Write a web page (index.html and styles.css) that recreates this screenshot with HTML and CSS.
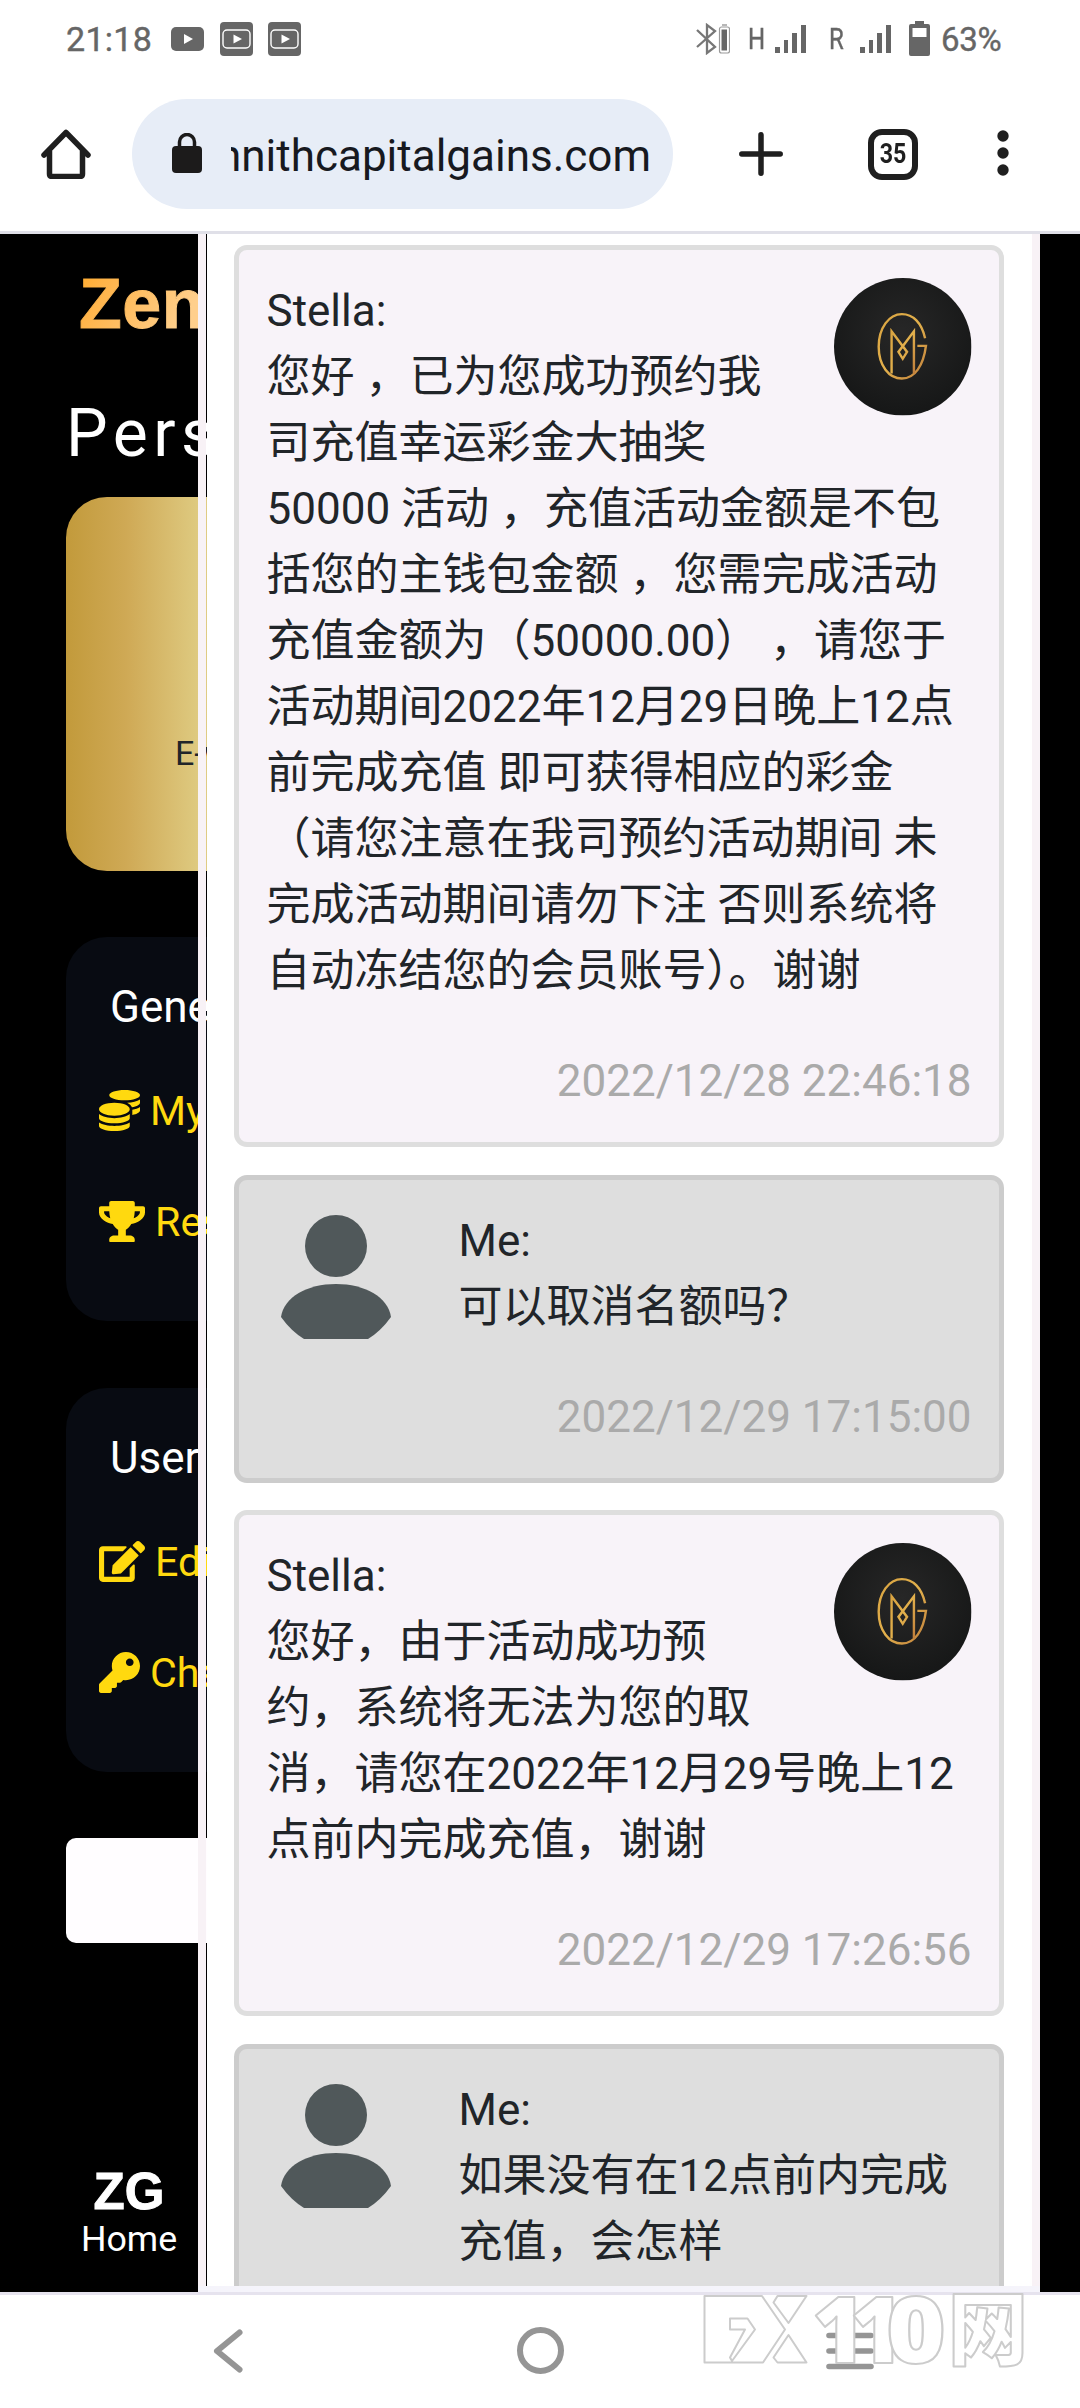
FILE: index.html
```html
<!DOCTYPE html>
<html lang="zh-CN">
<head>
<meta charset="utf-8">
<title>Messages</title>
<link rel="stylesheet" href="styles.css">
</head>
<body>
<svg class="defs" width="0" height="0">
  <defs>
    <radialGradient id="disc" cx=".5" cy=".4" r=".6"><stop offset="0" stop-color="#272727"/><stop offset="1" stop-color="#161717"/></radialGradient>
    <linearGradient id="foil" x1="0" y1="0" x2="1" y2="1"><stop offset="0" stop-color="#d9a441"/><stop offset=".5" stop-color="#e2b04c"/><stop offset="1" stop-color="#c07f3c"/></linearGradient>
    <symbol id="support" viewBox="0 0 160 160">
      <circle cx="80" cy="80" r="80" fill="url(#disc)"/>
      <g fill="none" stroke="url(#foil)" stroke-width="2.8">
        <path d="M106 70C102 52 92 42 79 42C64 42 52 58 52 80C52 102 64 117 79 117C94 117 104 102 107 79H97"/>
        <path d="M67 111V62L85 86L80 94L75 86L93 62V111"/>
      </g>
    </symbol>
    <symbol id="person" viewBox="0 0 110 124">
      <circle cx="55" cy="31" r="31"/>
      <path d="M0 102C3 82 26 69 55 69S107 82 110 102Q100 116 87 124H23Q10 116 0 102Z"/>
    </symbol>
    <symbol id="clip" viewBox="0 0 33 34">
      <rect width="33" height="34" rx="4" fill="#666"/>
      <rect x="3" y="8" width="27" height="18" rx="4" fill="none" stroke="#fff" stroke-width="1.4"/>
      <path d="M13.5 12.5L22 17L13.5 21.5Z" fill="#fff"/>
    </symbol>
    <symbol id="signal" viewBox="0 0 31 28">
      <path d="M0 22h5v6H0zM9 15h4v13H9zM17 8h5v20h-5zM26 0h5v28h-5z" fill="#666"/>
    </symbol>
  </defs>
</svg>
<div class="screen">
  <header class="status">
    <div class="status-left">
      <span class="clock">21:18</span>
      <svg class="yt" viewBox="0 0 33 24"><rect width="33" height="24" rx="5" fill="#666"/><path d="M13 7l9 5-9 5z" fill="#fff"/></svg>
      <svg class="clip"><use href="#clip"/></svg>
      <svg class="clip"><use href="#clip"/></svg>
    </div>
    <div class="status-right">
      <svg class="bt" viewBox="0 0 34 32" fill="none" stroke="#777">
        <path d="M1 7l18 17-8 6V2l8 6L1 24" stroke-width="2.3"/>
        <rect x="23.5" y="4" width="10" height="26" rx="2" stroke="#999" stroke-width="1.2"/>
        <path d="M25.5 6.5h5.500v21h-5.500z" fill="#666" stroke="none"/>
        <path d="M26 2h5" stroke="#999" stroke-width="1.4"/>
      </svg>
      <span class="net net-h">H</span>
      <svg class="signal"><use href="#signal"/></svg>
      <span class="net net-r">R</span>
      <svg class="signal"><use href="#signal"/></svg>
      <svg class="battery" viewBox="0 0 21 35"><path fill="#666" fill-rule="evenodd" d="M6 0h9v3h4q2 0 2 2v28q0 2-2 2H2q-2 0-2-2V5q0-2 2-2h4zM3.500 7v9h14V7z"/></svg>
      <span class="percent">63%</span>
    </div>
  </header>

  <nav class="toolbar">
    <svg class="home" viewBox="0 0 50 50" fill="none" stroke="#1f1f1f" stroke-width="5.500" stroke-linecap="round" stroke-linejoin="round"><path d="M3 26L25 3.500L47 26M8.500 22V45q0 2.500 2.500 2.500h28q2.500 0 2.500-2.500V22"/></svg>
    <div class="address">
      <svg class="lock" viewBox="0 0 30 40"><rect y="13" width="30" height="27" rx="4" fill="#1c1b1b"/><path d="M7.500 15V9a7.500 7.500 0 0 1 15 0v6" fill="none" stroke="#1c1b1b" stroke-width="3.500"/></svg>
      <span class="url"><span>zennithcapitalgains.com</span></span>
    </div>
    <svg class="plus" viewBox="0 0 44 44"><path d="M22 2.800V41.200M2.800 22H41.200" stroke="#1f1f1f" stroke-width="5.500" stroke-linecap="round"/></svg>
    <span class="tabs"><span>35</span></span>
    <svg class="more" viewBox="0 0 12 46" fill="#1f1f1f"><circle cx="6" cy="6" r="5.700"/><circle cx="6" cy="23" r="5.700"/><circle cx="6" cy="40" r="5.700"/></svg>
  </nav>

  <main class="page">
    <div class="account">
      <div class="brand">Zennith</div>
      <h1 class="title">Personal</h1>
      <section class="wallet"><span>E-wallet</span></section>
      <section class="menu">
        <h2>General</h2>
        <a class="item"><svg class="ico" viewBox="0 0 512 512"><path d="M0 405.300V448c0 35.300 86 64 192 64s192-28.700 192-64v-42.700C342.700 434.400 267.200 448 192 448S41.300 434.400 0 405.300zM320 128c106 0 192-28.700 192-64S426 0 320 0 128 28.700 128 64s86 64 192 64zM0 300.400V352c0 35.300 86 64 192 64s192-28.700 192-64v-51.600c-41.300 34-116.900 51.600-192 51.600S41.300 334.400 0 300.400zm416 11c57.300-11.100 96-31.700 96-55.400v-42.700c-23.200 16.400-57.300 27.600-96 34.500v63.600zM192 160C86 160 0 195.800 0 240s86 80 192 80 192-35.800 192-80-86-80-192-80zm219.300 56.300c60-10.800 100.700-32 100.700-56.300v-42.700c-35.500 25.100-96.500 38.600-160.700 41.800 29.500 14.300 51.200 33.500 60 57.200z"/></svg>My Wallet</a>
        <a class="item"><svg class="ico wide" viewBox="0 0 576 512"><path d="M552 64H448V24c0-13.300-10.700-24-24-24H152c-13.300 0-24 10.700-24 24v40H24C10.700 64 0 74.700 0 88v56c0 35.700 22.500 72.400 61.900 100.700 31.500 22.700 69.800 37.100 110 41.700C203.300 338.500 240 360 240 360v72h-48c-35.300 0-64 20.700-64 56v12c0 6.600 5.400 12 12 12h296c6.600 0 12-5.400 12-12v-12c0-35.300-28.700-56-64-56h-48v-72s36.700-21.500 68.100-73.600c40.300-4.600 78.600-19 110-41.700 39.300-28.300 61.900-65 61.900-100.700V88c0-13.300-10.700-24-24-24zM99.300 192.800C74.900 175.200 64 155.600 64 144v-16h64.200c1 32.600 5.800 61.200 12.800 86.200-15.100-5.200-29.200-12.400-41.700-21.400zM512 144c0 16.100-17.700 36.100-35.300 48.800-12.500 9-26.700 16.200-41.800 21.400 7-25 11.800-53.600 12.800-86.200H512v16z"/></svg>Results</a>
      </section>
      <section class="menu">
        <h2>User</h2>
        <a class="item"><svg class="ico wide" viewBox="0 0 576 512"><path d="M402.600 83.200l90.200 90.200c3.800 3.800 3.800 10 0 13.800L274.400 405.600l-92.800 10.300c-12.400 1.400-22.900-9.100-21.500-21.500l10.300-92.800L388.800 83.200c3.800-3.800 10-3.800 13.800 0zm162-22.900l-48.800-48.800c-15.200-15.200-39.900-15.200-55.200 0l-35.400 35.400c-3.800 3.800-3.800 10 0 13.800l90.200 90.200c3.800 3.800 10 3.800 13.800 0l35.400-35.400c15.200-15.300 15.200-40 0-55.200zM384 346.200V448H64V128h229.800c3.200 0 6.200-1.300 8.500-3.500l40-40c7.600-7.600 2.200-20.500-8.500-20.500H48C21.500 64 0 85.500 0 112v352c0 26.500 21.500 48 48 48h352c26.500 0 48-21.500 48-48V306.200c0-10.700-12.900-16-20.500-8.500l-40 40c-2.200 2.300-3.500 5.300-3.500 8.500z"/></svg>Edit Profile</a>
        <a class="item"><svg class="ico" viewBox="0 0 512 512"><path d="M512 176c0 97.200-78.800 176-176 176-11.200 0-22.200-1.100-32.800-3.100l-24 27A24 24 0 0 1 261.200 384H224v40c0 13.300-10.700 24-24 24h-40v40c0 13.300-10.700 24-24 24H24c-13.300 0-24-10.700-24-24v-78.100c0-6.400 2.500-12.500 7-17l161.800-161.800C163 213.800 160 195.300 160 176 160 78.800 238.800 0 336 0s176 78.500 176 176zM336 128c0 26.500 21.500 48 48 48s48-21.500 48-48-21.500-48-48-48-48 21.500-48 48z"/></svg>Change Password</a>
      </section>
      <div class="logout"></div>
      <a class="home-tab"><b>ZG</b><span>Home</span></a>
    </div>

    <div class="dialog">
      <div class="edge edge-left"></div>
      <div class="chat">
        <article class="msg from-support">
          <svg class="avatar"><use href="#support"/></svg>
          <p>Stella:<br>您好 ，已为您成功预约我<br>司充值幸运彩金大抽奖<br>50000 活动 ，充值活动金额是不包<br>括您的主钱包金额 ，您需完成活动<br>充值金额为（50000.00） ，请您于<br>活动期间2022年12月29日晚上12点<br>前完成充值 即可获得相应的彩金<br>（请您注意在我司预约活动期间 未<br>完成活动期间请勿下注 否则系统将<br>自动冻结您的会员账号<span class="tight">）</span>。谢谢</p>
          <time>2022/12/28 22:46:18</time>
        </article>
        <article class="msg from-me">
          <div class="row"><svg class="person"><use href="#person"/></svg><p>Me:<br>可以取消名额吗？</p></div>
          <time>2022/12/29 17:15:00</time>
        </article>
        <article class="msg from-support">
          <svg class="avatar"><use href="#support"/></svg>
          <p>Stella:<br>您好，由于活动成功预<br>约，系统将无法为您的取<br>消，请您在2022年12月29号晚上12<br>点前内完成充值，谢谢</p>
          <time>2022/12/29 17:26:56</time>
        </article>
        <article class="msg from-me">
          <div class="row"><svg class="person"><use href="#person"/></svg><p>Me:<br>如果没有在12点前内完成<br>充值，会怎样</p></div>
        </article>
      </div>
      <div class="edge"></div>
    </div>
  </main>

  <footer class="sysnav">
    <svg class="back" viewBox="0 0 30 44"><path d="M26.500 3.500L4 22L26.500 40.500" fill="none" stroke="#959595" stroke-width="6" stroke-linecap="round" stroke-linejoin="round"/></svg>
    <span class="circle"></span>
    <svg class="recents" viewBox="0 0 48 38"><path d="M3 3.500H45M3 19H45M3 34.500H45" stroke="#959595" stroke-width="5.600" stroke-linecap="round"/></svg>
    <svg class="watermark" viewBox="0 0 350 90" fill="#fff" stroke="#ccc" stroke-width="2" stroke-linejoin="round">
      <path d="M14.500 16H72L95 49.500L73 82.500H14.500ZM40 38.500V49.500H55L40 77.500L42 81L65 49.500L57.500 38.500Z"/>
      <path d="M83.500 22.500L87.500 16H116.500L98.500 43ZM83.500 77.500L98.500 55L116.500 82.500H87.500Z"/>
      <text x="122" y="82.500" class="wm-num">1</text>
      <text x="160" y="82.500" class="wm-num">1</text>
      <text x="196" y="82.500" class="wm-num" textLength="60" lengthAdjust="spacingAndGlyphs">0</text>
      <text x="258" y="78" class="wm-cjk">网</text>
    </svg>
  </footer>
</div>
</body>
</html>
```
FILE: styles.css
```css
* { box-sizing: border-box; }
body {
  margin: 0;
  background: #fff;
  font-family: Roboto, "Noto Sans CJK SC", sans-serif;
  color: #212529;
}
svg { display: block; flex: none; }
.defs { position: absolute; }
.screen {
  width: 1080px;
  height: 2408px;
  display: flex;
  flex-direction: column;
  overflow: hidden;
}

/* status bar */
.status {
  height: 78px;
  display: flex;
  justify-content: space-between;
  padding: 0 78px 0 66px;
  color: #666;
}
.status-left, .status-right { display: flex; align-items: center; }
.clock { width: 105px; font-size: 34px; letter-spacing: .3px; -webkit-text-stroke: .4px #666; }
.yt { width: 33px; height: 24px; margin-right: 16px; }
.clip { width: 33px; height: 34px; margin-right: 15px; }
.bt { width: 34px; height: 32px; margin-right: 18px; }
.net { font-size: 30px; line-height: 40px; transform-origin: left; transform: scaleX(.8); -webkit-text-stroke: .4px #666; }
.net-h { width: 27px; }
.net-r { width: 31px; margin-left: 23px; }
.signal { width: 31px; height: 28px; }
.battery { width: 21px; height: 35px; margin: -2px 11px 0 18px; }
.percent { width: 61px; font-size: 33px; letter-spacing: -.3px; -webkit-text-stroke: .4px #666; }

/* browser toolbar */
.toolbar {
  height: 156px;
  padding-top: 21px;
  display: flex;
  align-items: flex-start;
  border-bottom: 3px solid #e0e0e8;
}
.home { width: 50px; height: 50px; margin: 30px 0 0 41px; }
.address {
  width: 541px;
  height: 110px;
  margin-left: 41px;
  padding: 0 22px 0 40px;
  display: flex;
  align-items: center;
  background: #e7edf7;
  border-radius: 55px;
}
.lock { width: 30px; height: 40px; margin-top: -2px; }
.url {
  flex: 1;
  margin: 3px 0 0 29px;
  display: flex;
  justify-content: flex-end;
  overflow: hidden;
  font-size: 44px;
  line-height: 60px;
  color: #17191f;
}
.plus { width: 44px; height: 44px; margin: 33px 0 0 66px; }
.tabs {
  width: 50px;
  height: 51px;
  margin: 30px 0 0 85px;
  display: flex;
  justify-content: center;
  border: 6px solid #1f1f1f;
  border-radius: 14px;
  font: 700 28px/38px Roboto, sans-serif;
  color: #1f1f1f;
}
.tabs span { transform: scaleX(.83); }
.more { width: 12px; height: 46px; margin: 31px 0 0 79px; }

/* account page behind the dialog */
.page { position: relative; height: 2058px; background: #000; overflow: hidden; }
.account { height: 100%; padding: 0 66px; display: flex; flex-direction: column; white-space: nowrap; }
.brand {
  margin-top: 30px;
  padding-left: 13px;
  width: 400px;
  font: bold 70px/80px "Liberation Sans", Arial, sans-serif;
  letter-spacing: .5px;
  background: linear-gradient(120deg, #ffab2b 13px, #ffb347 40px, #ffcf8c 130px);
  -webkit-background-clip: text;
  background-clip: text;
  color: transparent;
  -webkit-text-stroke: 1px transparent;
}
.title { margin: 50px 0 0; font-size: 66px; font-weight: 400; line-height: 80px; letter-spacing: 5.5px; color: #fff; }
.wallet {
  height: 374px;
  margin-top: 23px;
  padding: 236px 0 0 109px;
  border-radius: 41px;
  font-size: 34px;
  line-height: 40px;
  background: linear-gradient(90deg, #c29a3b 0, #cfa955 60px, #dfcb82 135px, #fff0b0 500px, #c29a3b);
}
.menu { height: 384px; margin-top: 66px; padding: 40px 33px 0; border-radius: 41px; background: #080b12; }
.menu h2 { margin: 0 0 44px 11px; font-size: 44px; font-weight: 400; line-height: 60px; color: #fff; }
.item { display: flex; align-items: center; height: 60px; margin-bottom: 51px; font-size: 41.25px; color: #ffd90f; }
.menu + .menu { margin-top: 67px; }
.ico { width: 41px; height: 41px; margin-right: 10px; margin-top: -1px; fill: #ffd90f; }
.ico.wide { width: 46px; }
.logout { height: 105px; margin-top: 66px; border-radius: 10px; background: #fffdff; }
.home-tab { width: 126px; margin-top: 216px; display: flex; flex-direction: column; align-items: center; color: #fff; }
.home-tab b { font: bold 51px/66px "Liberation Sans", Arial, sans-serif; -webkit-text-stroke: 1px #fff; }
.home-tab span { margin-top: -1px; font-size: 35.75px; line-height: 30px; }

/* message dialog, over the account page */
.dialog { position: absolute; top: 0; left: 198px; width: 842px; height: 2058px; display: flex; border-bottom: 6px solid #f5f4fb; }
.edge { width: 8px; background: #f8f2f6; }
.edge-left { margin-right: 1px; }
.chat { width: 825px; padding: 11px 28px 0 27px; background: #fff; overflow: hidden; }
.msg {
  margin-bottom: 27.7px;
  padding: 28px 27.5px;
  border: 5px solid #dedede;
  border-radius: 13px;
  background: #f8f3f9;
  font-size: 44px;
  line-height: 66px;
  text-spacing-trim: space-all;
}
.msg p { margin: 0 0 44px; white-space: nowrap; }
.tight { letter-spacing: -22px; }
.from-me { border-color: #ccc; background: #dedede; }
.from-me:last-child { height: 400px; }
.avatar { float: right; width: 137.5px; height: 137.5px; }
.row { display: flex; }
.person { width: 110px; height: 124px; margin: 7px 68px 0 14px; fill: #50585a; }
.msg time { display: block; text-align: right; color: #aaa; }

/* system navigation */
.sysnav { position: relative; height: 116px; display: flex; align-items: flex-start; border-top: 3px solid #e6e3ee; }
.back { width: 30px; height: 44px; margin: 34px 0 0 213px; }
.circle { width: 47px; height: 47px; margin: 32px 0 0 274px; border: 6px solid #959595; border-radius: 50%; }
.recents { width: 48px; height: 38px; margin: 37px 0 0 262px; }
.watermark { position: absolute; left: 690px; top: -15px; width: 350px; height: 90px; }
.wm-num { font: 800 92px "Open Sans", sans-serif; }
.wm-cjk { font: 900 80px "Noto Sans CJK SC", sans-serif; }
```
